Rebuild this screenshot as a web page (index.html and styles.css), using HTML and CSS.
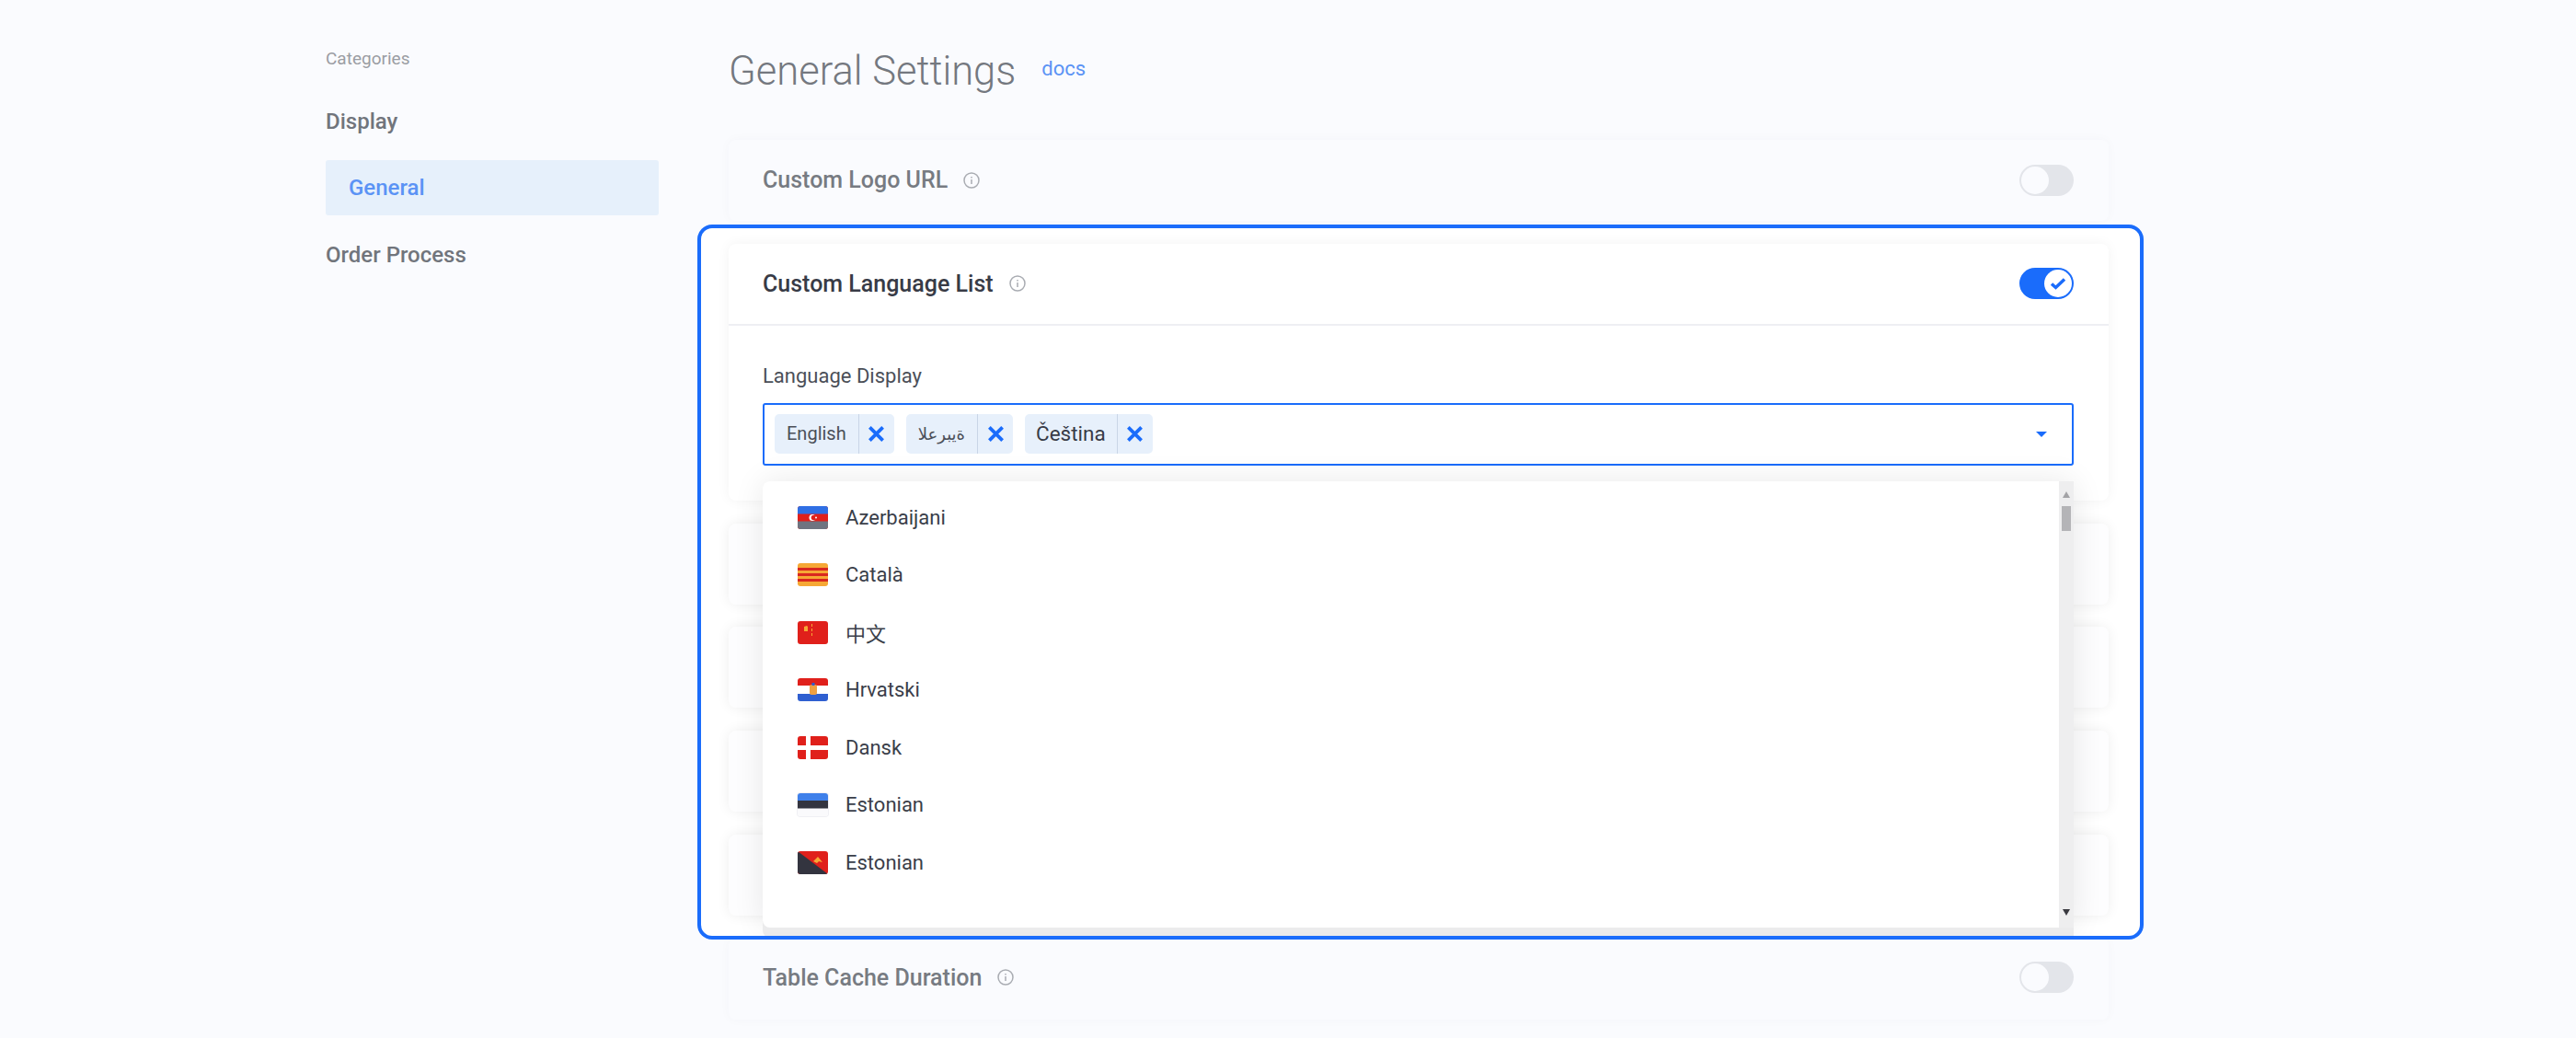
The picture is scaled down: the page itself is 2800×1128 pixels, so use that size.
FILE: index.html
```html
<!DOCTYPE html>
<html lang="en">
<head>
    <meta charset="UTF-8">
    <meta name="viewport" content="width=device-width, initial-scale=1.0">
    <title>General Settings</title>
    <link rel="stylesheet" href="styles.css">
</head>
<body>
    <div class="layout">
        <nav class="sidebar">
            <div class="sidebar-title">Categories</div>
            <a class="nav-item">Display</a>
            <a class="nav-item active">General</a>
            <a class="nav-item">Order Process</a>
        </nav>

        <main class="content">
            <div class="page-head">
                <h1>General Settings</h1>
                <a class="docs">docs</a>
            </div>

            <div class="card-list">
                <div class="highlight-bg"></div>

                <section class="card faded">
                    <div class="card-head">
                        <span class="card-title">Custom Logo URL</span>
                        <svg class="info" viewBox="0 0 18 18"><circle cx="9" cy="9" r="8"/><path d="M9 8v5M9 5v1.5"/></svg>
                        <span class="toggle"></span>
                    </div>
                </section>

                <section class="card open">
                    <div class="card-head">
                        <span class="card-title">Custom Language List</span>
                        <svg class="info" viewBox="0 0 18 18"><circle cx="9" cy="9" r="8"/><path d="M9 8v5M9 5v1.5"/></svg>
                        <span class="toggle on">
                            <svg viewBox="0 0 30 30"><path d="M8 15.500l4.500 4 9.500-9"/></svg>
                        </span>
                    </div>
                    <div class="card-body">
                        <label class="field-label">Language Display</label>
                        <div class="select">
                            <span class="chip">
                                <span class="chip-text">English</span>
                                <span class="chip-x"><svg viewBox="0 0 16 16"><path d="M2 2l12 12M14 2L2 14"/></svg></span>
                            </span>
                            <span class="chip">
                                <span class="chip-text arabic">ةيبرعلا</span>
                                <span class="chip-x"><svg viewBox="0 0 16 16"><path d="M2 2l12 12M14 2L2 14"/></svg></span>
                            </span>
                            <span class="chip">
                                <span class="chip-text big">Čeština</span>
                                <span class="chip-x"><svg viewBox="0 0 16 16"><path d="M2 2l12 12M14 2L2 14"/></svg></span>
                            </span>
                            <span class="caret"></span>

                            <div class="dropdown">
                                <ul class="lang-list">
                                    <li>
                                        <svg class="flag" viewBox="0 0 33 25">
                                            <rect width="33" height="25" fill="#e0201b"/>
                                            <rect width="33" height="8.500" fill="#2f6fe4"/>
                                            <rect y="16.500" width="33" height="8.500" fill="#6f7480"/>
                                            <circle cx="16" cy="12.500" r="3.500" fill="#fff"/>
                                            <circle cx="17.500" cy="12.500" r="2.800" fill="#e0201b"/>
                                            <circle cx="20" cy="12.500" r="1" fill="#fff"/>
                                        </svg>
                                        Azerbaijani
                                    </li>
                                    <li>
                                        <svg class="flag" viewBox="0 0 33 25">
                                            <rect width="33" height="25" fill="#f6a835"/>
                                            <path d="M0 5h33v3H0zM0 11h33v3H0zM0 17h33v3H0z" fill="#d9281f"/>
                                        </svg>
                                        Català
                                    </li>
                                    <li>
                                        <svg class="flag" viewBox="0 0 33 25">
                                            <rect width="33" height="25" fill="#e0201b"/>
                                            <path d="M7 6l3-1 1 1v5H7z" fill="#f6a835"/>
                                            <path d="M15 3h1v3h-1zM15 8h1v3h-1zM15 13h1v3h-1z" fill="#f6a835"/>
                                        </svg>
                                        <span class="cjk">中文</span>
                                    </li>
                                    <li>
                                        <svg class="flag" viewBox="0 0 33 25">
                                            <rect width="33" height="25" fill="#fff"/>
                                            <rect width="33" height="8" fill="#e0201b"/>
                                            <rect y="17" width="33" height="8" fill="#2f5fd0"/>
                                            <rect x="13" y="7" width="8" height="11" rx="2" fill="#f0a040"/>
                                            <rect x="15.500" y="5" width="3" height="3" fill="#2f5fd0"/>
                                        </svg>
                                        Hrvatski
                                    </li>
                                    <li>
                                        <svg class="flag" viewBox="0 0 33 25">
                                            <rect width="33" height="25" fill="#e0201b"/>
                                            <rect x="9" width="5" height="25" fill="#fff"/>
                                            <rect y="10" width="33" height="5" fill="#fff"/>
                                        </svg>
                                        Dansk
                                    </li>
                                    <li>
                                        <svg class="flag flag-light" viewBox="0 0 33 25">
                                            <rect width="33" height="25" fill="#fafafc"/>
                                            <rect width="33" height="8" fill="#3f80ea"/>
                                            <rect y="8" width="33" height="8.500" fill="#33343f"/>
                                        </svg>
                                        Estonian
                                    </li>
                                    <li>
                                        <svg class="flag" viewBox="0 0 33 25">
                                            <rect width="33" height="25" fill="#e0201b"/>
                                            <path d="M0 0l33 25H0z" fill="#33343f"/>
                                            <path d="M17 11l5-5 5 6-4-1-2 2z" fill="#f6a835"/>
                                        </svg>
                                        Estonian
                                    </li>
                                </ul>
                                <div class="scrollbar">
                                    <span class="arrow-up"></span>
                                    <span class="thumb"></span>
                                    <span class="arrow-down"></span>
                                </div>
                            </div>
                        </div>
                    </div>
                </section>

                <section class="card inner"></section>
                <section class="card inner"></section>
                <section class="card inner"></section>
                <section class="card inner"></section>

                <section class="card faded last">
                    <div class="card-head">
                        <span class="card-title">Table Cache Duration</span>
                        <svg class="info" viewBox="0 0 18 18"><circle cx="9" cy="9" r="8"/><path d="M9 8v5M9 5v1.5"/></svg>
                        <span class="toggle"></span>
                    </div>
                </section>

                <div class="highlight-border"></div>
            </div>
        </main>
    </div>
</body>
</html>
```

FILE: styles.css
```css
html, body {
    height: 100%;
}
body {
    font-family: Roboto, Arial, sans-serif;
    margin: 0;
    background-color: #fafbfe;
    color: #2f3340;
    overflow: hidden;
}
.layout {
    display: flex;
    gap: 76px;
    padding-left: 354px;
}

/* sidebar */
.sidebar {
    width: 362px;
    padding-top: 51px;
    display: flex;
    flex-direction: column;
    gap: 27px;
}
.sidebar-title {
    font-size: 19px;
    line-height: 26px;
    color: #9a9da3;
    margin-bottom: 13px;
}
.nav-item {
    font-size: 24px;
    font-weight: 500;
    line-height: 30px;
    color: #71757c;
}
.active {
    padding: 15px 0 15px 25px;
    margin-bottom: 1px;
    background-color: #e6f0fb;
    color: #5b93f5;
    border-radius: 3px;
}

/* header */
.content {
    width: 1500px;
    padding-top: 50px;
}
.page-head {
    display: flex;
    align-items: center;
    gap: 28px;
    height: 56px;
    margin-bottom: 46px;
}
h1 {
    margin: 0;
    font-size: 43.500px;
    line-height: 56px;
    font-weight: 300;
    color: #74787f;
}
.docs {
    font-size: 22px;
    margin-bottom: 8px;
    color: #5b93f5;
}

/* cards */
.card-list {
    position: relative;
    display: flex;
    flex-direction: column;
    gap: 24.750px;
}
.card {
    background-color: #fff;
    border-radius: 8px;
    min-height: 88px;
    box-sizing: border-box;
}
.card-head {
    display: flex;
    align-items: center;
    height: 87px;
    padding: 0 38px 0 37px;
}
.card-title {
    font-size: 25px;
    font-weight: 500;
    color: #383b46;
}
.info {
    width: 18px;
    height: 18px;
    margin-left: 17px;
    fill: none;
    stroke: #a9acb2;
    stroke-width: 1.500;
}
.faded {
    background-color: #fafbfe;
    box-shadow: 0 0 12px rgba(40, 50, 90, 0.03);
}
.faded .card-title {
    color: #777b82;
}
.inner {
    position: relative;
    z-index: 2;
    background-color: #fdfdfe;
    box-shadow: 0 0 14px rgba(0, 0, 0, 0.07);
}
.open {
    position: relative;
    z-index: 3;
    box-shadow: 0 0 14px rgba(0, 0, 0, 0.05);
}
.open .card-head {
    border-bottom: 2px solid #eeeff3;
}
.last {
    position: relative;
    z-index: 4;
}
.last .card-head {
    height: 85px;
}

/* toggle */
.toggle {
    position: relative;
    margin-left: auto;
    width: 59px;
    height: 34px;
    border-radius: 17px;
    background-color: #e3e5ea;
}
.toggle::before {
    content: "";
    position: absolute;
    left: 2px;
    top: 2px;
    width: 30px;
    height: 30px;
    border-radius: 50%;
    background-color: #fafbfe;
}
.toggle.on {
    background-color: #1a6cfb;
}
.toggle.on::before {
    left: 27px;
    background-color: #fff;
}
.toggle svg {
    position: absolute;
    left: 27px;
    top: 2px;
    width: 30px;
    height: 30px;
    fill: none;
    stroke: #1a6cfb;
    stroke-width: 3.500;
}

/* form */
.card-body {
    padding: 40px 38px 38px 37px;
}
.field-label {
    display: block;
    font-size: 22px;
    line-height: 30px;
    color: #4b4f58;
    margin-bottom: 14px;
}
.select {
    position: relative;
    display: flex;
    align-items: center;
    gap: 13px;
    height: 68px;
    box-sizing: border-box;
    padding-left: 11px;
    border: 2px solid #1a6cfb;
    border-radius: 3px;
    background-color: #fff;
}
.chip {
    display: flex;
    align-items: center;
    height: 43px;
    background-color: #e7f0fb;
    border-radius: 5px;
}
.chip-text {
    font-size: 20px;
    line-height: 43px;
    padding: 0 13px;
    color: #4b4f58;
}
.chip-text.arabic {
    font-family: "DejaVu Sans", sans-serif;
    font-size: 18px;
    padding: 0 13px;
}
.chip-text.big {
    font-size: 22.500px;
    padding: 0 12px;
    color: #383b46;
}
.chip-x {
    display: flex;
    align-items: center;
    justify-content: center;
    width: 38px;
    height: 43px;
    border-left: 1px solid #c9d5e6;
}
.chip-x svg {
    width: 19px;
    height: 19px;
    fill: none;
    stroke: #1a6cfb;
    stroke-width: 3.200;
}
.caret {
    position: absolute;
    right: 27px;
    top: 29px;
    border-left: 6px solid transparent;
    border-right: 6px solid transparent;
    border-top: 6px solid #1a6cfb;
}

/* dropdown */
.dropdown {
    position: absolute;
    left: -2px;
    top: 83px;
    width: 1425px;
    height: 485px;
    display: flex;
    background-color: #fff;
    border-radius: 8px 0 0 8px;
    box-shadow: 0 11px 0 #ebebec, 0 0 34px rgba(0, 0, 0, 0.09);
}
.lang-list {
    list-style: none;
    flex: 1;
    margin: 0;
    padding: 8px 0 0 38px;
}
.lang-list li {
    display: flex;
    align-items: center;
    gap: 19px;
    height: 62.500px;
    font-size: 22px;
    color: #3a3e49;
}
.flag {
    width: 33px;
    height: 25px;
    border-radius: 3px;
}
.flag-light {
    box-shadow: 0 0 0 1px #f0f0f4;
}
.cjk {
    font-family: "Noto Sans CJK SC", sans-serif;
}
.scrollbar {
    position: relative;
    width: 16px;
    background-color: #eeeeef;
}
.thumb {
    position: absolute;
    left: 3px;
    top: 27px;
    width: 10px;
    height: 27px;
    background-color: #b4b4b7;
}
.arrow-up {
    position: absolute;
    left: 4px;
    top: 11px;
    border-left: 4px solid transparent;
    border-right: 4px solid transparent;
    border-bottom: 7px solid #a3a3a6;
}
.arrow-down {
    position: absolute;
    left: 4px;
    top: 465px;
    border-left: 4px solid transparent;
    border-right: 4px solid transparent;
    border-top: 7px solid #3a3a40;
}

/* highlight box round the open card */
.highlight-bg,
.highlight-border {
    position: absolute;
    left: -34px;
    top: 92px;
    width: 1572px;
    height: 777px;
    box-sizing: border-box;
    border-radius: 16px;
}
.highlight-bg {
    z-index: 1;
    background-color: #fff;
}
.highlight-border {
    z-index: 5;
    border: 4px solid #1a6cfb;
    pointer-events: none;
}
```
